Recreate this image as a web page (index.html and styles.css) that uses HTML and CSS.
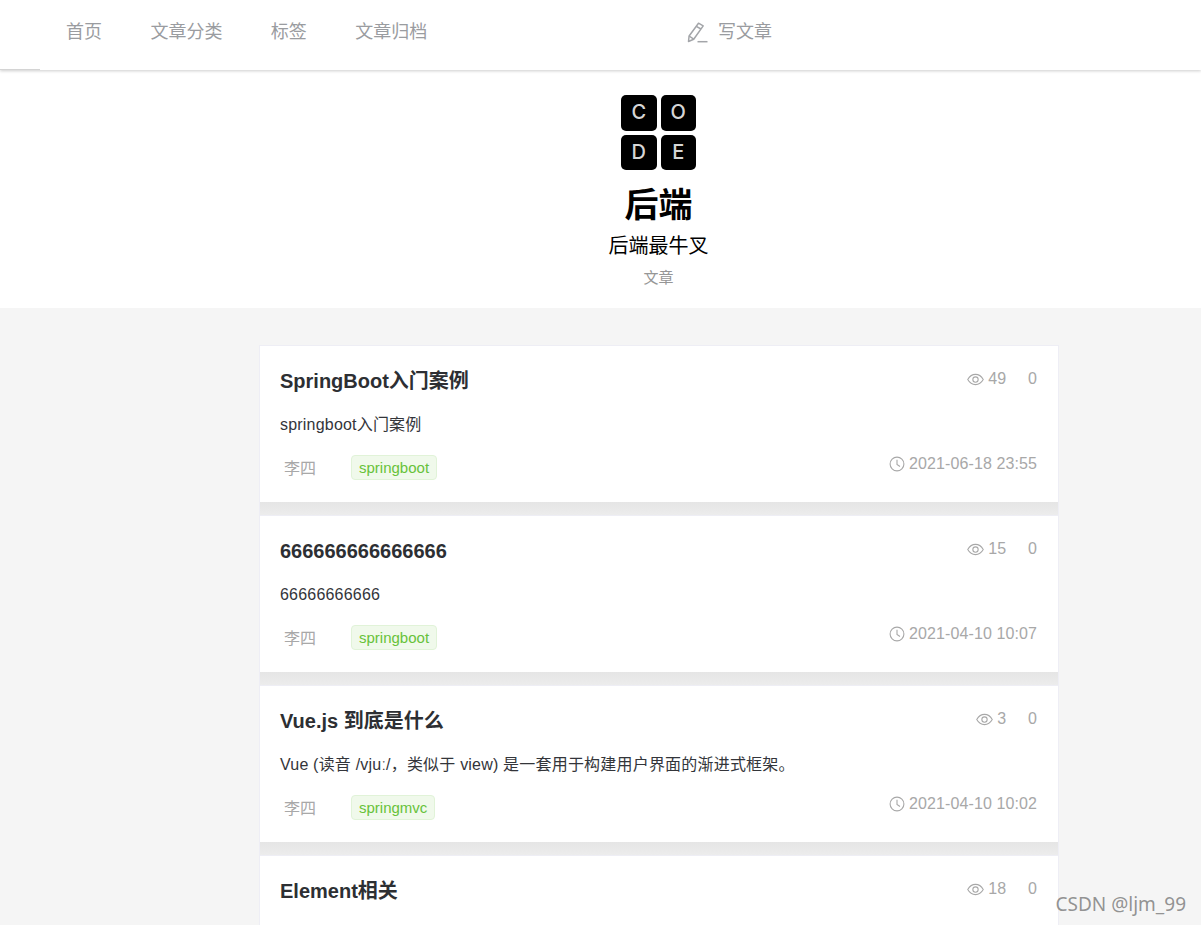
FILE: index.html
```html
<!DOCTYPE html>
<html lang="zh-CN">
<head>
    <meta charset="UTF-8">
    <meta name="viewport" content="width=device-width, initial-scale=1.0">
    <title>后端</title>
    <link rel="stylesheet" href="styles.css">
</head>
<body>
    <header class="topbar">
        <nav class="nav">
            <a class="nav-item">首页</a>
            <a class="nav-item">文章分类</a>
            <a class="nav-item">标签</a>
            <a class="nav-item">文章归档</a>
        </nav>
        <a class="write">
            <svg class="write-icon" viewBox="0 0 21 21" fill="none" stroke="#a3a5a9" stroke-width="1.5" stroke-linejoin="round">
                <path d="M11.500 1.200 16.200 3.900 6.700 17.200 1.500 19.500 2.100 14z"/>
                <path d="M9.300 4.300 14 7"/>
                <path d="M2.100 14 6.700 17.200"/>
                <path d="M10.500 19.700H20.500"/>
            </svg>
            写文章
        </a>
    </header>

    <section class="hero">
        <div class="logo">
            <span class="logo-cell">C</span>
            <span class="logo-cell">O</span>
            <span class="logo-cell">D</span>
            <span class="logo-cell">E</span>
        </div>
        <h1 class="hero-title">后端</h1>
        <p class="hero-desc">后端最牛叉</p>
        <p class="hero-count">文章</p>
    </section>

    <main class="list">
        <article class="card">
            <div class="card-top">
                <h2 class="card-title">SpringBoot入门案例</h2>
                <div class="stats">
                    <svg class="eye" viewBox="0 0 16 12" fill="none" stroke="#a8a8a8" stroke-width="1"><path d="M.7 6C2.500 2.800 5 1.200 8 1.200S13.500 2.800 15.300 6C13.500 9.200 11 10.800 8 10.800S2.500 9.200.7 6z"/><circle cx="8" cy="6" r="2.500"/></svg>
                    <span class="views">49</span>
                    <span class="comments">0</span>
                </div>
            </div>
            <p class="card-desc">springboot入门案例</p>
            <div class="card-bottom">
                <span class="author">李四</span>
                <span class="tag">springboot</span>
                <span class="time">
                    <svg class="clock" viewBox="0 0 16 16" fill="none" stroke="#a8a8a8" stroke-width="1.100"><circle cx="8" cy="8" r="6.900"/><path d="M8 3.800V8.500L11 10.500"/></svg>
                    2021-06-18 23:55
                </span>
            </div>
        </article>

        <article class="card">
            <div class="card-top">
                <h2 class="card-title">666666666666666</h2>
                <div class="stats">
                    <svg class="eye" viewBox="0 0 16 12" fill="none" stroke="#a8a8a8" stroke-width="1"><path d="M.7 6C2.500 2.800 5 1.200 8 1.200S13.500 2.800 15.300 6C13.500 9.200 11 10.800 8 10.800S2.500 9.200.7 6z"/><circle cx="8" cy="6" r="2.500"/></svg>
                    <span class="views">15</span>
                    <span class="comments">0</span>
                </div>
            </div>
            <p class="card-desc">66666666666</p>
            <div class="card-bottom">
                <span class="author">李四</span>
                <span class="tag">springboot</span>
                <span class="time">
                    <svg class="clock" viewBox="0 0 16 16" fill="none" stroke="#a8a8a8" stroke-width="1.100"><circle cx="8" cy="8" r="6.900"/><path d="M8 3.800V8.500L11 10.500"/></svg>
                    2021-04-10 10:07
                </span>
            </div>
        </article>

        <article class="card">
            <div class="card-top">
                <h2 class="card-title">Vue.js 到底是什么</h2>
                <div class="stats">
                    <svg class="eye" viewBox="0 0 16 12" fill="none" stroke="#a8a8a8" stroke-width="1"><path d="M.7 6C2.500 2.800 5 1.200 8 1.200S13.500 2.800 15.300 6C13.500 9.200 11 10.800 8 10.800S2.500 9.200.7 6z"/><circle cx="8" cy="6" r="2.500"/></svg>
                    <span class="views">3</span>
                    <span class="comments">0</span>
                </div>
            </div>
            <p class="card-desc">Vue (读音 /vjuː/，类似于 view) 是一套用于构建用户界面的渐进式框架。</p>
            <div class="card-bottom">
                <span class="author">李四</span>
                <span class="tag">springmvc</span>
                <span class="time">
                    <svg class="clock" viewBox="0 0 16 16" fill="none" stroke="#a8a8a8" stroke-width="1.100"><circle cx="8" cy="8" r="6.900"/><path d="M8 3.800V8.500L11 10.500"/></svg>
                    2021-04-10 10:02
                </span>
            </div>
        </article>

        <article class="card">
            <div class="card-top">
                <h2 class="card-title">Element相关</h2>
                <div class="stats">
                    <svg class="eye" viewBox="0 0 16 12" fill="none" stroke="#a8a8a8" stroke-width="1"><path d="M.7 6C2.500 2.800 5 1.200 8 1.200S13.500 2.800 15.300 6C13.500 9.200 11 10.800 8 10.800S2.500 9.200.7 6z"/><circle cx="8" cy="6" r="2.500"/></svg>
                    <span class="views">18</span>
                    <span class="comments">0</span>
                </div>
            </div>
        </article>
    </main>

    <div class="watermark">CSDN @ljm_99</div>
</body>
</html>
```

FILE: styles.css
```css
html {
    height: 100%;
    overflow: hidden;
}
body {
    position: relative;
    height: 100%;
    margin: 0;
    overflow: hidden;
    background-color: #f5f5f5;
    font-family: "Liberation Sans", "Noto Sans CJK SC", sans-serif;
    color: #2d2f33;
}
.topbar {
    position: relative;
    z-index: 2;
    display: flex;
    align-items: center;
    box-sizing: border-box;
    height: 70px;
    padding: 0 0 10px 66px;
    background: #fff;
    box-shadow: 0 1px 3px rgba(0, 0, 0, 0.2);
    font-size: 18px;
    color: #9a9ca0;
}
.topbar::after {
    content: "";
    position: absolute;
    left: 0;
    bottom: 0;
    width: 40px;
    height: 1px;
    background: #d4d4d4;
}
.nav {
    display: flex;
    gap: 48.4px;
    width: 621px;
}
.write {
    display: flex;
    align-items: center;
    gap: 10px;
}
.write-icon {
    width: 21px;
    height: 21px;
    margin-top: 4px;
}
.hero {
    box-sizing: border-box;
    height: 238px;
    padding: 25px 0 0 116px;
    background: #fff;
    text-align: center;
}
.logo {
    display: grid;
    grid-template-columns: 35.5px 35.5px;
    gap: 4px;
    width: 75px;
    margin: 0 auto;
}
.logo-cell {
    height: 35.5px;
    line-height: 35px;
    border-radius: 5px;
    background: #000;
    color: #d6d6d6;
    font-family: "Inter", sans-serif;
    font-size: 20px;
    font-weight: 500;
}
.hero-title {
    margin: 11px 0 0;
    font-size: 34px;
    line-height: 48px;
    color: #000;
}
.hero-desc {
    margin: 2px 0 0;
    font-size: 20px;
    line-height: 30px;
    color: #000;
}
.hero-count {
    margin: 7px 0 0;
    font-size: 15px;
    line-height: 20px;
    color: #969696;
}
.list {
    width: 800px;
    margin: 37px 0 0 259px;
}
/* the grey strip between two cards is part of the card */
.card {
    box-sizing: border-box;
    height: 170px;
    padding: 0 21px 0 20px;
    background: linear-gradient(#fff 156px, #e5e5e5 156px, #ededed 170px);
    border: 1px solid #eeeef5;
    border-bottom: 0;
}
.card-top {
    display: flex;
    justify-content: space-between;
    align-items: center;
    height: 70px;
}
.card-title {
    margin: 0;
    font-size: 20px;
    line-height: 24px;
    font-weight: bold;
    color: #2d2f33;
}
.stats {
    display: flex;
    align-items: center;
    margin-top: -4px;
    font-size: 16px;
    color: #a8a8a8;
}
.eye {
    width: 17px;
    height: 13px;
    margin-right: 4px;
}
.comments {
    margin-left: 22px;
}
.card-desc {
    margin: -3px 0 0;
    font-size: 16px;
    line-height: 24px;
    letter-spacing: 0.2px;
    color: #33353a;
}
.card-bottom {
    display: flex;
    align-items: center;
    height: 31px;
    margin-top: 15px;
    font-size: 16px;
    color: #a8a8a8;
}
.author {
    width: 67px;
    margin-top: -2px;
    margin-left: 4px;
}
.tag {
    box-sizing: border-box;
    height: 25px;
    padding: 0 6.5px 0 7px;
    line-height: 23px;
    background: #f0f9eb;
    border: 1px solid #e1f3d8;
    border-radius: 4px;
    font-size: 15px;
    color: #67c23a;
}
.time {
    display: flex;
    align-items: center;
    gap: 4px;
    margin-top: -8px;
    margin-left: auto;
    letter-spacing: 0.1px;
}
.clock {
    width: 16px;
    height: 16px;
}
.watermark {
    position: absolute;
    right: 15px;
    bottom: 8px;
    z-index: 3;
    font-family: "Noto Sans", sans-serif;
    font-size: 19px;
    color: rgba(120, 120, 120, 0.8);
}
```
